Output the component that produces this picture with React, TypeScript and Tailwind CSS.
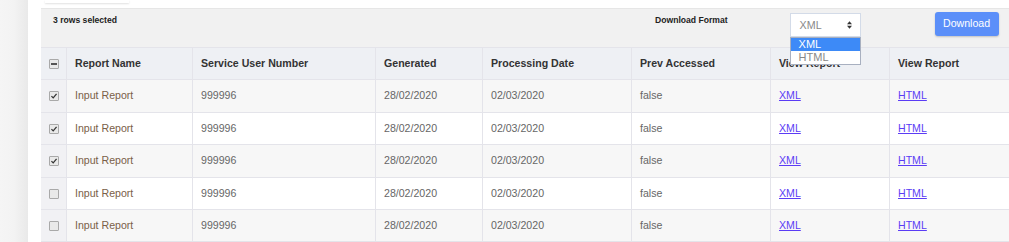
import React from 'react';

interface ReportRow {
  id: number;
  name: string;
  serviceUserNumber: string;
  generated: string;
  processingDate: string;
  prevAccessed: string;
  selected: boolean;
}

const rows: ReportRow[] = [
  { id: 1, name: 'Input Report', serviceUserNumber: '999996', generated: '28/02/2020', processingDate: '02/03/2020', prevAccessed: 'false', selected: true },
  { id: 2, name: 'Input Report', serviceUserNumber: '999996', generated: '28/02/2020', processingDate: '02/03/2020', prevAccessed: 'false', selected: true },
  { id: 3, name: 'Input Report', serviceUserNumber: '999996', generated: '28/02/2020', processingDate: '02/03/2020', prevAccessed: 'false', selected: true },
  { id: 4, name: 'Input Report', serviceUserNumber: '999996', generated: '28/02/2020', processingDate: '02/03/2020', prevAccessed: 'false', selected: false },
  { id: 5, name: 'Input Report', serviceUserNumber: '999996', generated: '28/02/2020', processingDate: '02/03/2020', prevAccessed: 'false', selected: false },
];

const rowHeights = ['h-[33px]', 'h-[32px]', 'h-[33px]', 'h-[32px]', 'h-[32px]'];

const gridCols = 'grid grid-cols-[25px_126px_183px_107px_149px_139px_119px_120px]';

// small grey native-looking checkbox
const Check = ({ state }: { state: 'on' | 'off' | 'some' }) => (
  <span className="flex h-[10px] w-[10px] items-center justify-center rounded-[1px] border border-[#a9a9a9] bg-[#e9e9e9]">
    {state === 'on' && (
      <svg viewBox="0 0 10 10" className="h-[8px] w-[8px]">
        <path d="M1.8 5.2 L4 7.4 L8.2 2.4" fill="none" stroke="#333" strokeWidth="1.6" />
      </svg>
    )}
    {state === 'some' && <span className="h-[2px] w-[6px] bg-[#555]" />}
  </span>
);

const Cell = ({ children, className = '' }: { children?: React.ReactNode; className?: string }) => (
  <div className={`flex items-center border-l border-[#e4e4ea] px-[8px] ${className}`}>{children}</div>
);

export default function App() {
  return (
    <div className="flex h-[242px] w-[1009px] overflow-hidden bg-white font-['Liberation_Sans',Arial,sans-serif]">
      {/* side rail */}
      <div className="w-[28px] shrink-0 bg-gradient-to-r from-[#f5f5f5] via-[#f3f3f3] to-[#e9e9e9]" />
      <div className="w-[13px] shrink-0 bg-white" />

      <div className="flex min-w-0 flex-1 flex-col">
        {/* edge of card above */}
        <div className="flex h-[8px] shrink-0 bg-white">
          <div className="ml-[4px] h-[3px] w-[84px] bg-white shadow-[0_1px_2px_rgba(0,0,0,0.12)]" />
        </div>

        {/* toolbar */}
        <div className="flex h-[39px] shrink-0 items-start border-t border-[#e6e6e6] bg-[#f1f1f1]">
          <div className="pl-[12px] pt-[5px] text-[8.6px] font-bold text-[#222]">3 rows selected</div>
          <div className="ml-[538px] pt-[5px] text-[8.6px] font-bold text-[#222]">Download Format</div>
          <div className="relative ml-[62px] mt-[4px]">
            <div className="flex h-[24px] w-[71px] items-center justify-between border border-[#d3dbe8] bg-white pl-[9px] pr-[8px] text-[10.7px] text-[#888]">
              <span>XML</span>
              <svg viewBox="0 0 6 9" className="h-[8px] w-[5px]">
                <path d="M3 0 L6 3.5 H0 Z M3 9 L0 5.5 H6 Z" fill="#333" />
              </svg>
            </div>
            <div className="absolute left-0 top-[24px] z-10 w-[71px] border border-[#a8b0c0] bg-white text-[11px] leading-[13px]">
              <div className="bg-[#3d8af7] pl-[8px] text-white">XML</div>
              <div className="pl-[8px] text-[#888]">HTML</div>
            </div>
          </div>
          <button className="ml-[74px] mt-[3px] h-[24px] w-[64px] rounded-[3px] bg-[#5b8ff9] text-[10.6px] text-white shadow-[0_1px_2px_rgba(0,0,0,0.2)]">
            Download
          </button>
        </div>

        {/* header */}
        <div className={`${gridCols} h-[32px] shrink-0 border-t border-[#e4e4ea] bg-[#eef0f4] text-[10.6px] font-bold text-[#333]`}>
          <div className="flex items-center justify-center">
            <Check state="some" />
          </div>
          <Cell>Report Name</Cell>
          <Cell>Service User Number</Cell>
          <Cell>Generated</Cell>
          <Cell>Processing Date</Cell>
          <Cell>Prev Accessed</Cell>
          <Cell>View Report</Cell>
          <Cell>View Report</Cell>
        </div>

        {/* body */}
        {rows.map((row, i) => (
          <div
            key={row.id}
            className={`${gridCols} ${rowHeights[i]} shrink-0 border-t border-[#e4e4ea] text-[10.6px] text-[#666] ${i % 2 === 0 ? 'bg-[#f7f7f7]' : 'bg-white'}`}
          >
            <div className="flex items-center justify-center bg-[#f1f1f4]">
              <Check state={row.selected ? 'on' : 'off'} />
            </div>
            <Cell className="text-[#7a6048]">{row.name}</Cell>
            <Cell>{row.serviceUserNumber}</Cell>
            <Cell>{row.generated}</Cell>
            <Cell>{row.processingDate}</Cell>
            <Cell>{row.prevAccessed}</Cell>
            <Cell>
              <a href="#" className="text-[#5b3cf5] underline">XML</a>
            </Cell>
            <Cell>
              <a href="#" className="text-[#5b3cf5] underline">HTML</a>
            </Cell>
          </div>
        ))}
        <div className="h-[2px] border-t border-[#e4e4ea]" />
      </div>
    </div>
  );
}
